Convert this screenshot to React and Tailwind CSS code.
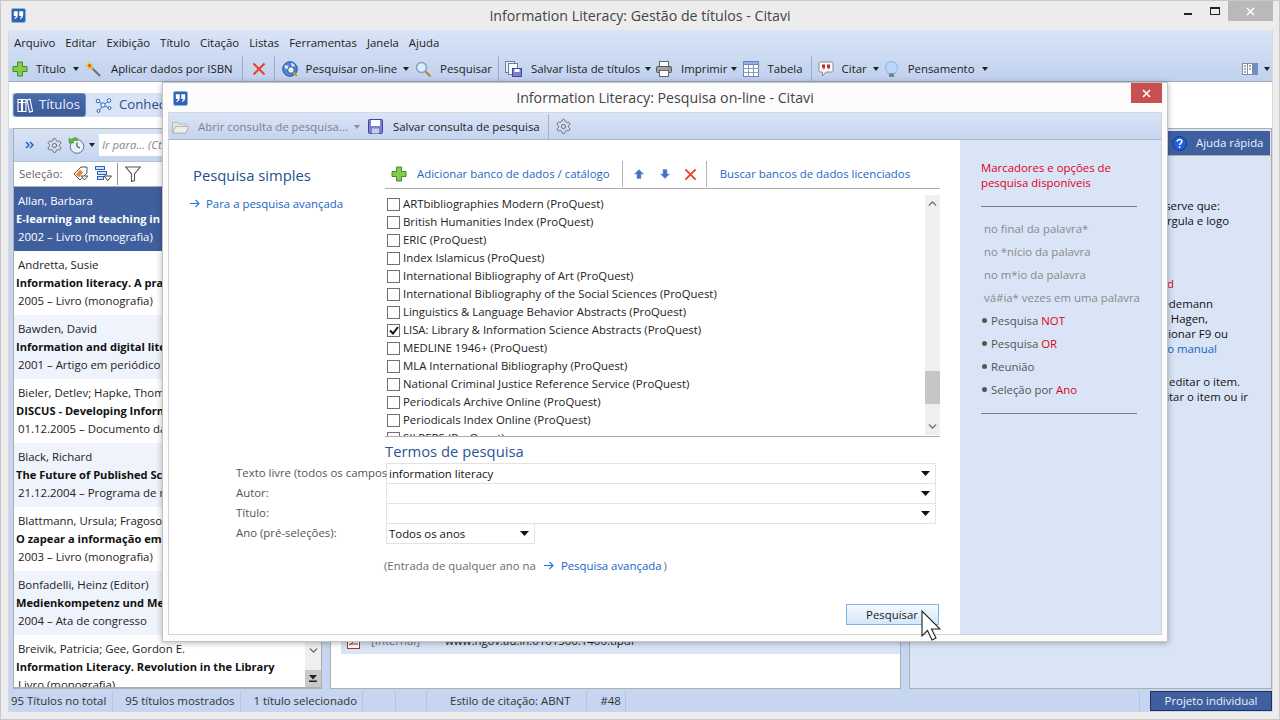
// App.jsx
import React from 'react';
import { Settings, ChevronUp, ChevronDown } from 'lucide-react';

const Logo = () => (
  <svg width="15" height="15" viewBox="0 0 16 16">
    <rect x="0.500" y="0.500" width="15" height="15" rx="2" fill="#2f62b5" stroke="#8fb0e0" />
    <path d="M3 3.500h4.200v3.800c0 2-1 3.600-3 4.500l-.7-1c1-.6 1.600-1.300 1.700-2.400H3zM8.800 3.500H13v3.800c0 2-1 3.600-3 4.500l-.7-1c1-.6 1.600-1.300 1.700-2.400H8.800z" fill="#fff" />
  </svg>
);

const Plus = () => (
  <svg width="16" height="16" viewBox="0 0 16 16" className="shrink-0">
    <path d="M5.500 1h5v4.500h4.500v5h-4.500v4.500h-5v-4.500h-4.500v-5h4.500z" fill="#86c94f" stroke="#3f8f22" />
  </svg>
);

const RedX = ({ size = 14 }) => (
  <svg width={size} height={size} viewBox="0 0 14 14" className="shrink-0">
    <path d="M1.500 1.500l11 11M12.500 1.500l-11 11" stroke="#e8402a" strokeWidth="2" />
  </svg>
);

const Caret = ({ className = '' }) => (
  <svg width="6" height="4" viewBox="0 0 6 4" className={`shrink-0 ${className}`}>
    <path d="M0 0h6L3 4z" fill="#222" />
  </svg>
);

const Wand = () => (
  <svg width="16" height="16" viewBox="0 0 16 16" className="shrink-0">
    <path d="M6 6l9 9" stroke="#6f6f6f" strokeWidth="2" />
    <path d="M4.500 0.500l1 3 3-.5-2 2.500 1.500 2.500-3-1-2 2 .2-3-3-1.500 3-.8z" fill="#f6a623" stroke="#e6d34a" strokeWidth="0.600" />
    <circle cx="4.500" cy="4.500" r="1.200" fill="#e23b2e" />
  </svg>
);

const Globe = () => (
  <svg width="17" height="17" viewBox="0 0 17 17" className="shrink-0">
    <circle cx="8" cy="8" r="7.300" fill="#4f86d8" stroke="#24559f" />
    <path d="M3 4c2 0 3 1 4 2S5 9 4 8 2 6 3 4zM9 2c2 0 3 1 4 3l-3 1z" fill="#dbe9fb" />
    <circle cx="9" cy="9" r="3.300" fill="#e8f2ff" stroke="#3d4f6d" />
    <path d="M11.500 11.500l3.500 3.500" stroke="#c79a2c" strokeWidth="2" />
  </svg>
);

const Search = () => (
  <svg width="17" height="17" viewBox="0 0 17 17" className="shrink-0">
    <circle cx="6.500" cy="6.500" r="5" fill="#dcecfb" stroke="#7f9fbf" strokeWidth="1.400" />
    <path d="M10.500 10.500l5 5" stroke="#b98a3a" strokeWidth="2.400" />
  </svg>
);

const SaveList = () => (
  <svg width="17" height="16" viewBox="0 0 17 16" className="shrink-0">
    <rect x="0.500" y="0.500" width="9" height="11" fill="#e6edf7" stroke="#6a7fa6" />
    <rect x="3.500" y="2.500" width="9" height="11" fill="#f4f7fb" stroke="#6a7fa6" />
    <rect x="7.500" y="7.500" width="9" height="8" fill="#7b7fd0" stroke="#47498f" />
    <rect x="9.500" y="8" width="5" height="3" fill="#fff" />
  </svg>
);

const Printer = () => (
  <svg width="16" height="16" viewBox="0 0 16 16" className="shrink-0">
    <rect x="3.500" y="0.500" width="9" height="5" fill="#fff" stroke="#666" />
    <rect x="0.500" y="5.500" width="15" height="6" rx="1" fill="#9aa5ad" stroke="#555" />
    <rect x="3.500" y="9.500" width="9" height="6" fill="#fff" stroke="#666" />
    <rect x="12" y="6.500" width="2" height="1.500" fill="#4bb04b" />
  </svg>
);

const TableIcon = () => (
  <svg width="16" height="16" viewBox="0 0 16 16" className="shrink-0">
    <rect x="0.500" y="0.500" width="15" height="15" fill="#fff" stroke="#6a86b8" />
    <rect x="0.500" y="0.500" width="15" height="3" fill="#8fb0e0" stroke="#6a86b8" />
    <path d="M5.500 3.500v12M10.500 3.500v12M.5 7.500h15M.5 11.500h15" stroke="#8a9dbf" fill="none" />
  </svg>
);

const Bubble = () => (
  <svg width="16" height="16" viewBox="0 0 16 16" className="shrink-0">
    <path d="M2.500 1h11A1.500 1.500 0 0 1 15 2.500v7A1.500 1.500 0 0 1 13.500 11H8l-3.500 4v-4h-2A1.500 1.500 0 0 1 1 9.500v-7A1.500 1.500 0 0 1 2.500 1z" fill="#fbfbfb" stroke="#8a8a8a" />
    <path d="M4 3.500h3v2.700c0 1.100-.6 1.900-1.800 2.400l-.4-.7c.6-.3.8-.7.9-1.200H4zM9 3.500h3v2.700c0 1.100-.6 1.900-1.800 2.400l-.4-.7c.6-.3.8-.7.9-1.200H9z" fill="#c62828" />
  </svg>
);

const Bulb = () => (
  <svg width="13" height="17" viewBox="0 0 13 17" className="shrink-0">
    <path d="M6.500 0.500a6 6 0 0 1 6 6c0 2.500-1.800 3.500-2.500 6H3c-.7-2.500-2.500-3.500-2.500-6a6 6 0 0 1 6-6z" fill="#bcd6fa" stroke="#8fb0de" />
    <rect x="4" y="12.500" width="5" height="3.500" fill="#77818c" />
  </svg>
);

const ViewIcon = () => (
  <svg width="16" height="12" viewBox="0 0 16 12" className="shrink-0">
    <rect x="0.500" y="0.500" width="15" height="11" fill="#fff" stroke="#7f8ea5" />
    <path d="M5.500 .5v11M10.500 .5v11" stroke="#7f8ea5" />
    <rect x="11" y="1" width="4" height="10" fill="#6f8fc4" />
    <path d="M2 3h2M2 6h2M2 9h2M7 3h2M7 6h2" stroke="#555" />
  </svg>
);

const Books = () => (
  <svg width="16" height="15" viewBox="0 0 16 15" className="shrink-0">
    <path d="M1 1.500h3.500v12H1zM5.500 1.500H9v12H5.500zM10 2l3-.8 2.500 12-3 .8z" fill="none" stroke="#fff" strokeWidth="1.100" />
    <path d="M1 4.500h3.500M5.500 4.500H9" stroke="#fff" />
  </svg>
);

const Network = () => (
  <svg width="17" height="16" viewBox="0 0 17 16" className="shrink-0">
    <path d="M8 8L3 4M8 8l6-4M8 8l-4 6M8 8l6 3" stroke="#3f78c9" strokeWidth="1" />
    <circle cx="8" cy="8" r="2.200" fill="#fff" stroke="#2f62b5" />
    <circle cx="3" cy="4" r="1.800" fill="#fff" stroke="#2f62b5" />
    <circle cx="14" cy="3.500" r="1.800" fill="#fff" stroke="#2f62b5" />
    <circle cx="3.500" cy="14" r="1.500" fill="#fff" stroke="#2f62b5" />
    <circle cx="14.500" cy="11" r="1.500" fill="#fff" stroke="#2f62b5" />
  </svg>
);

const Clock = () => (
  <svg width="17" height="17" viewBox="0 0 17 17" className="shrink-0">
    <circle cx="9" cy="9.500" r="6.800" fill="#e8f0fa" stroke="#5d7595" />
    <path d="M9 5.500v4l3 1.500" stroke="#333" fill="none" />
    <path d="M1 1v5h5L4.500 4.500C6 3 8 3 9.500 3.500L9 1C7 .5 5 1 3 2.500z" fill="#5bbb3a" stroke="#38861f" strokeWidth="0.500" />
  </svg>
);

const DoubleChevron = () => (
  <svg width="9" height="8" viewBox="0 0 9 8" className="shrink-0">
    <path d="M1 1l3 3-3 3M5 1l3 3-3 3" fill="none" stroke="#1f66c8" strokeWidth="1.500" />
  </svg>
);

const TagIcon = () => (
  <svg width="17" height="16" viewBox="0 0 17 16" className="shrink-0">
    <path d="M9 1h6v6l-7 7-6-6z" fill="#fff" stroke="#555" />
    <path d="M8 3.500l3 3-4 5-3-3z" fill="#f0803c" />
    <path d="M9 10h7l-3.500 4z" fill="#fff" stroke="#555" />
  </svg>
);

const TreeFilter = () => (
  <svg width="17" height="16" viewBox="0 0 17 16" className="shrink-0">
    <rect x="0.500" y="0.500" width="9" height="3" fill="#cfe0f7" stroke="#2f62b5" />
    <rect x="2.500" y="5.500" width="9" height="3" fill="#cfe0f7" stroke="#2f62b5" />
    <rect x="2.500" y="10.500" width="6" height="3" fill="#cfe0f7" stroke="#2f62b5" />
    <path d="M9 10h7.500l-3.700 4.500z" fill="#fff" stroke="#444" />
  </svg>
);

const Funnel = () => (
  <svg width="16" height="16" viewBox="0 0 16 16" className="shrink-0">
    <path d="M.8 1h14.400L9.500 8v6.500l-3 1V8z" fill="#fff" stroke="#555" strokeWidth="1.100" />
  </svg>
);

const Folder = () => (
  <svg width="17" height="15" viewBox="0 0 17 15" className="shrink-0">
    <path d="M.5 3.500h5l1.500 1.500h7v9H.5z" fill="#e4e4e4" stroke="#b5b5b5" />
    <path d="M.5 14l3-6.500h13L14 14z" fill="#ededed" stroke="#b5b5b5" />
  </svg>
);

const Floppy = () => (
  <svg width="15" height="15" viewBox="0 0 15 15" className="shrink-0">
    <rect x="0.500" y="0.500" width="14" height="14" rx="1" fill="#7d7fd4" stroke="#42449a" />
    <rect x="3" y="1" width="9" height="6" fill="#fff" />
    <rect x="4" y="9.500" width="7" height="5" fill="#c9cdea" />
  </svg>
);

const ArrowV = ({ down }) => (
  <svg width="10" height="10" viewBox="0 0 10 10" className={down ? 'shrink-0 rotate-180' : 'shrink-0'}>
    <path d="M5 .5L9.500 5H7v4.500H3V5H.5z" fill="#3f72c8" stroke="#6f97da" strokeWidth="0.500" />
  </svg>
);

const ArrowLink = () => (
  <svg width="10" height="9" viewBox="0 0 10 9" className="shrink-0">
    <path d="M0 4.500h9M5.500 1l3.500 3.500L5.500 8" fill="none" stroke="#1a78e0" strokeWidth="1.100" />
  </svg>
);

const Cursor = () => (
  <svg width="20" height="31" viewBox="0 0 20 31">
    <path d="M1 1v25l5.500-5.500L11 30l4-2-4.500-9H19z" fill="#fff" stroke="#222" strokeWidth="1.100" />
  </svg>
);

const Sep = ({ className = 'h-[26px] bg-[#9fadc4]' }) => <div className={`w-px shrink-0 ${className}`} />;

const titles = [
  ['Allan, Barbara', 'E-learning and teaching in library and information', '2002 – Livro (monografia)'],
  ['Andretta, Susie', 'Information literacy. A practitioner’s guide', '2005 – Livro (monografia)'],
  ['Bawden, David', 'Information and digital literacies', '2001 – Artigo em periódico'],
  ['Bieler, Detlev; Hapke, Thomas', 'DISCUS - Developing Information', '01.12.2005 – Documento da internet'],
  ['Black, Richard', 'The Future of Published Scholarship', '21.12.2004 – Programa de rádio'],
  ['Blattmann, Ursula; Fragoso, Graça', 'O zapear a informação em bibliotecas', '2003 – Livro (monografia)'],
  ['Bonfadelli, Heinz (Editor)', 'Medienkompetenz und Medienleistungen', '2004 – Ata de congresso'],
  ['Breivik, Patricia; Gee, Gordon E.', 'Information Literacy. Revolution in the Library', 'Livro (monografia)'],
];

const databases = [
  'ARTbibliographies Modern (ProQuest)',
  'British Humanities Index (ProQuest)',
  'ERIC (ProQuest)',
  'Index Islamicus (ProQuest)',
  'International Bibliography of Art (ProQuest)',
  'International Bibliography of the Social Sciences (ProQuest)',
  'Linguistics & Language Behavior Abstracts (ProQuest)',
  'LISA: Library & Information Science Abstracts (ProQuest)',
  'MEDLINE 1946+ (ProQuest)',
  'MLA International Bibliography (ProQuest)',
  'National Criminal Justice Reference Service (ProQuest)',
  'Periodicals Archive Online (ProQuest)',
  'Periodicals Index Online (ProQuest)',
  'SILPERS (ProQuest)',
];

const TitleRow = ({ item, index }) => {
  const selected = index === 0;
  const alt = index % 2 === 0;
  return (
    <div className={`h-[64px] shrink-0 pt-[5px] whitespace-nowrap leading-[18px] ${selected ? 'bg-[#3f5f9e] text-white' : alt ? 'bg-[#eff3fb] text-[#222]' : 'bg-white text-[#222]'}`}>
      <div className="pl-[4px]">{item[0]}</div>
      <div className={`pl-[2px] text-[11.100px] font-bold ${selected ? '' : 'text-[#111]'}`}>{item[1]}</div>
      <div className="pl-[4px]">{item[2]}</div>
    </div>
  );
};

const Field = ({ value, wide = true }) => (
  <div className={`flex h-[21px] items-center justify-between pl-[2px] pr-[5px] border border-[#e3e3e3] -mt-px first:mt-0 text-[#111] ${wide ? 'w-[550px]' : 'w-[149px]'}`}>
    <span>{value}</span>
    <svg width="9" height="5" viewBox="0 0 9 5"><path d="M0 0h9L4.500 5z" fill="#111" /></svg>
  </div>
);

const SearchDialog = () => (
  <div className="absolute left-[161px] top-[81px] z-10 flex h-[560px] w-[1006px] flex-col border border-[#c4c4c4] bg-[#fcfcfc] px-[5px] pb-[6px] shadow-[0_1px_6px_rgba(0,0,0,0.3)]">
    <div className="relative flex h-[29px] shrink-0 items-center justify-center pt-[1px] text-[14.200px] text-[#444]">
      <div className="absolute left-[5px] top-[8px]"><Logo /></div>
      <span>Information Literacy: Pesquisa on-line - Citavi</span>
      <div className="absolute right-0 top-0 flex h-[20px] w-[31px] items-center justify-center bg-[#c75050]">
        <svg width="9" height="9" viewBox="0 0 9 9"><path d="M1 1l7 7M8 1l-7 7" stroke="#fff" strokeWidth="1.600" /></svg>
      </div>
    </div>

    <div className="flex h-[28px] shrink-0 items-center border border-[#d2d8e2] border-b-[#aeb6c4] bg-gradient-to-b from-[#d9e4f6] to-[#c5d4ef] pl-[3px] pt-[1px]">
      <Folder />
      <span className="ml-[9px] text-[#7b828e]">Abrir consulta de pesquisa...</span>
      <Caret className="ml-[6px] opacity-40" />
      <div className="ml-[8px]"><Floppy /></div>
      <span className="ml-[10px] text-[#222]">Salvar consulta de pesquisa</span>
      <Sep className="ml-[8px] h-[26px] bg-[#a8b3c6]" />
      <Settings size={17} strokeWidth={1.300} className="ml-[6px] text-[#666]" />
    </div>

    <div className="flex min-h-0 flex-1 border-x border-b border-[#d2d2d2] bg-white">
      <div className="flex w-[216px] shrink-0 flex-col pl-[24px] pt-[25px]">
        <div className="text-[14.800px] leading-[20px] text-[#24508f]">Pesquisa simples</div>
        <div className="mt-[10px] -ml-[3px] flex items-center gap-[6px] text-[#1765c4]">
          <ArrowLink />
          <span>Para a pesquisa avançada</span>
        </div>
      </div>

      <div className="relative w-[575px] shrink-0 pt-[20px]">
        <div className="flex h-[29px] w-[555px] items-center border-b border-[#aeaeae] text-[#1f66c8]">
          <div className="ml-[6px]"><Plus /></div>
          <span className="ml-[10px]">Adicionar banco de dados / catálogo</span>
          <Sep className="ml-[12px] h-[26px] bg-[#b5b5b5]" />
          <div className="ml-[11px]"><ArrowV /></div>
          <div className="ml-[16px]"><ArrowV down /></div>
          <div className="ml-[14px]"><RedX size={13} /></div>
          <Sep className="ml-[9px] h-[26px] bg-[#b5b5b5]" />
          <span className="ml-[13px]">Buscar bancos de dados licenciados</span>
        </div>

        <div className="mt-[6px] flex h-[242px] w-[555px] border-b border-[#aeaeae]">
          <div className="min-w-0 flex-1 overflow-hidden">
            {databases.map((name, i) => (
              <label key={name} className="flex h-[18px] shrink-0 items-center whitespace-nowrap text-[#222]">
                <span className="ml-[2px] flex h-[13px] w-[13px] shrink-0 items-center justify-center border border-[#707070] bg-white">
                  {i === 7 && <svg width="10" height="9" viewBox="0 0 10 9"><path d="M1 4.500l3 3L9 1" fill="none" stroke="#111" strokeWidth="2" /></svg>}
                </span>
                <span className="ml-[3px]">{name}</span>
              </label>
            ))}
          </div>
          <div className="flex h-[240px] w-[15px] shrink-0 flex-col items-center bg-[#efefef]">
            <ChevronUp size={13} strokeWidth={2.500} className="mt-[2px] text-[#666]" />
            <div className="mt-[161px] h-[33px] w-full bg-[#c6c6c6]" />
            <ChevronDown size={13} strokeWidth={2.500} className="mt-[16px] text-[#666]" />
          </div>
        </div>

        <div className="mt-[3px] h-[23px] text-[14.800px] leading-[22px] text-[#2a5596]">Termos de pesquisa</div>

        <div className="relative">
          <div className="absolute right-[calc(100%-1px)] top-0 w-[150px] whitespace-nowrap text-[#555]">
            <div className="flex h-[20px] items-center">Texto livre (todos os campos</div>
            <div className="flex h-[20px] items-center">Autor:</div>
            <div className="flex h-[20px] items-center">Título:</div>
            <div className="flex h-[20px] items-center">Ano (pré-seleções):</div>
          </div>
          <div className="ml-px flex flex-col">
            <Field value="information literacy" />
            <Field value="" />
            <Field value="" />
            <Field value="Todos os anos" wide={false} />
          </div>
        </div>

        <div className="mt-[13px] flex items-center text-[#6a6a6a]">
          <span className="-ml-px">(Entrada de qualquer ano na</span>
          <div className="ml-[8px]"><ArrowLink /></div>
          <span className="ml-[7px] text-[#1765c4]">Pesquisa avançada</span>
          <span className="ml-[2px]">)</span>
        </div>

        <div className="absolute left-[461px] top-[464px] flex h-[21px] w-[93px] items-center justify-center border border-[#7ab4ee] bg-gradient-to-b from-[#f4f9fe] to-[#d5e7fa] pr-[1px] text-[#222]">
          Pesquisar
        </div>
        <div className="absolute left-[536px] top-[470px] z-20"><Cursor /></div>
      </div>

      <div className="min-w-0 flex-1 bg-[#d9e4f6] pl-[21px] pt-[20px]">
        <div className="leading-[15px] text-[#e0001b]">Marcadores e opções de<br />pesquisa disponíveis</div>
        <div className="mt-[16px] h-px w-[156px] bg-[#808080]" />
        <div className="mt-[10px] flex flex-col text-[#8a8a8a]">
          {['no final da palavra*', 'no *nício da palavra', 'no m*io da palavra', 'vá#ia* vezes em uma palavra'].map((t) => (
            <div key={t} className="flex h-[23px] items-center pl-[3px] whitespace-nowrap">{t}</div>
          ))}
          {[['Pesquisa ', 'NOT'], ['Pesquisa ', 'OR'], ['Reunião', ''], ['Seleção por ', 'Ano']].map(([a, b]) => (
            <div key={a + b} className="flex h-[23px] items-center whitespace-pre text-[#555]">
              <span className="mr-[4px] ml-[1px] h-[5px] w-[5px] rounded-full bg-[#555]" />
              {a}<span className="text-[#e0001b]">{b}</span>
            </div>
          ))}
        </div>
        <div className="mt-[12px] h-px w-[156px] bg-[#808080]" />
      </div>
    </div>
  </div>
);

const MainToolbar = () => (
  <div className="mt-[1px] flex h-[26px] items-center pl-[3px] text-[#222] whitespace-nowrap">
    <Plus />
    <span className="ml-[8px]">Título</span>
    <Caret className="ml-[7px]" />
    <div className="ml-[6px]"><Wand /></div>
    <span className="ml-[10px]">Aplicar dados por ISBN</span>
    <Sep className="ml-[9px] h-[26px] bg-[#9fadc4]" />
    <div className="ml-[9px]"><RedX /></div>
    <Sep className="ml-[8px] h-[26px] bg-[#9fadc4]" />
    <div className="ml-[7px]"><Globe /></div>
    <span className="ml-[7px]">Pesquisar on-line</span>
    <Caret className="ml-[6px]" />
    <div className="ml-[6px]"><Search /></div>
    <span className="ml-[8px]">Pesquisar</span>
    <Sep className="ml-[6px] h-[26px] bg-[#9fadc4]" />
    <div className="ml-[6px]"><SaveList /></div>
    <span className="ml-[9px]">Salvar lista de títulos</span>
    <Caret className="ml-[5px]" />
    <div className="ml-[5px]"><Printer /></div>
    <span className="ml-[9px]">Imprimir</span>
    <Caret className="ml-[4px]" />
    <div className="ml-[6px]"><TableIcon /></div>
    <span className="ml-[8px]">Tabela</span>
    <Sep className="ml-[8px] h-[26px] bg-[#9fadc4]" />
    <div className="ml-[6px]"><Bubble /></div>
    <span className="ml-[8px]">Citar</span>
    <Caret className="ml-[6px]" />
    <div className="ml-[6px]"><Bulb /></div>
    <span className="ml-[10px]">Pensamento</span>
    <Caret className="ml-[7px]" />
    <div className="ml-auto flex items-center gap-[6px] pr-[2px]">
      <ViewIcon />
      <Caret />
    </div>
  </div>
);

const App = () => {
  return (
    <div className="relative flex h-[720px] w-[1280px] flex-col overflow-hidden border border-[#c8c8c8] bg-[#ececec] font-['Open_Sans','Noto_Sans',sans-serif] text-[11.400px]">
      <div className="relative flex h-[29px] shrink-0 items-center justify-center text-[14.200px] text-[#444]">
        <div className="absolute left-[10px] top-[7px]"><Logo /></div>
        <span>Information Literacy: Gestão de títulos - Citavi</span>
        <div className="absolute right-[6px] top-0 flex h-[20px] items-center">
          <div className="mr-[18px] mt-[5px] h-[2px] w-[8px] bg-[#222]" />
          <div className="mr-[8px] h-[8px] w-[10px] border border-t-2 border-[#222]" />
          <div className="flex h-[20px] w-[45px] items-center justify-center bg-[#b9b9b9]">
            <svg width="9" height="9" viewBox="0 0 9 9"><path d="M1 1l7 7M8 1l-7 7" stroke="#fff" strokeWidth="1.500" /></svg>
          </div>
        </div>
      </div>

      <div className="ml-[7px] mr-[6px] flex min-h-0 flex-1 flex-col border-x border-[#d8d8d8]">
        <div className="h-[52px] shrink-0 border-b border-[#9fa9b8] bg-gradient-to-b from-[#d9e4f6] to-[#c0d1ee]">
          <div className="flex h-[25px] items-center gap-[10px] pl-[5px] text-[#222]">
            <span>Arquivo</span><span>Editar</span><span>Exibição</span><span>Título</span><span>Citação</span>
            <span>Listas</span><span>Ferramentas</span><span>Janela</span><span>Ajuda</span>
          </div>
          <MainToolbar />
        </div>

        <div className="flex h-[46px] shrink-0 bg-white pl-[3px] pt-[11px]">
          <div className="flex h-[24px] w-[150px] items-center bg-[#d9e4f6] pl-[1px] text-[13.200px] whitespace-nowrap">
            <div className="flex h-[24px] w-[73px] shrink-0 items-center gap-[6px] rounded-[3px] border border-[#6f8cc0] bg-gradient-to-b from-[#4a6cab] to-[#3a5a98] pl-[3px] text-[#e8eefa]">
              <Books />
              <span>Títulos</span>
            </div>
            <div className="ml-[9px]"><Network /></div>
            <span className="ml-[7px] text-[#2c4d85]">Conhecimento</span>
          </div>
        </div>

        <div className="flex min-h-0 flex-1 bg-[#c6d5f0]">
          <div className="ml-[4px] flex w-[309px] shrink-0 flex-col overflow-hidden border border-b-2 border-[#aeaeae] bg-white">
            <div className="flex h-[33px] shrink-0 items-center border-b border-[#b5c0d2] bg-gradient-to-b from-[#d9e4f6] to-[#c5d4ef] pl-[11px]">
              <DoubleChevron />
              <Settings size={17} strokeWidth={1.300} className="ml-[12px] text-[#666]" />
              <div className="ml-[5px]"><Clock /></div>
              <Caret className="ml-[4px]" />
              <div className="ml-[4px] flex h-[22px] flex-1 items-center bg-white pl-[3px] italic text-[#888]">Ir para... (Ctrl+G)</div>
            </div>
            <div className="flex h-[25px] shrink-0 items-center border-b border-[#aeaeae] pl-[5px] text-[#666]">
              <span>Seleção:</span>
              <div className="ml-[9px]"><TagIcon /></div>
              <div className="ml-[6px]"><TreeFilter /></div>
              <Sep className="ml-[5px] h-[22px] bg-[#999]" />
              <div className="ml-[7px]"><Funnel /></div>
            </div>
            <div className="relative min-h-0 flex-1 overflow-hidden">
              {titles.map((item, i) => <TitleRow key={item[0]} item={item} index={i} />)}
              <div className="absolute bottom-0 right-0 flex h-[48px] w-[16px] flex-col items-center justify-between bg-[#efefef]">
                <ChevronDown size={13} strokeWidth={2.500} className="mt-[5px] text-[#666]" />
                <div className="flex h-[17px] w-full items-center justify-center bg-[#c9c9c9]">
                  <svg width="8" height="7" viewBox="0 0 8 7"><path d="M0 0h8L4 4.500zM0 5.500h8V7H0z" fill="#222" /></svg>
                </div>
              </div>
            </div>
          </div>

          <div className="ml-[8px] flex w-[571px] shrink-0 flex-col justify-end border border-[#aeaeae] bg-white pb-[34px]">
            <div className="ml-[10px] flex h-[30px] items-center bg-[#d9e4f6] pl-[6px] text-[#777] whitespace-nowrap">
              <svg width="13" height="13" viewBox="0 0 13 13" className="mt-[6px]"><rect x="0.500" y="0.500" width="12" height="12" fill="#fff" stroke="#a33" /><path d="M2 9c3-1 4-3 5-5M3 8h8" stroke="#a33" fill="none" /></svg>
              <span className="ml-[11px] mt-[4px]">[Internal]</span>
              <span className="ml-[25px] mt-[4px] text-[#222]">www.ngov.au.in.0101500.1400.tipdf</span>
            </div>
          </div>

          <div className="ml-[8px] flex min-w-0 flex-1 flex-col border border-[#aeaeae] bg-[#d9e4f6]">
            <div className="mt-[2px] flex h-[25px] shrink-0 items-center justify-end border-b border-[#aeaeae] bg-[#d9e4f6] pr-[1px]">
              <div className="flex h-[24px] w-[102px] items-center gap-[9px] bg-[#3f5f9e] pl-[4px] text-[#eef2fa]">
                <svg width="15" height="15" viewBox="0 0 15 15"><circle cx="7.500" cy="7.500" r="7" fill="#1f5fd8" stroke="#12398a" /><path d="M5.200 5.600c.2-1.400 1.100-2 2.400-2 1.300 0 2.300.8 2.300 2 0 1.900-2.300 1.700-2.300 3.500" fill="none" stroke="#fff" strokeWidth="1.500" /><rect x="6.700" y="10.300" width="1.600" height="1.600" fill="#fff" /></svg>
                <span>Ajuda rápida</span>
              </div>
            </div>
            <div className="pt-[41.500px] text-[#111] whitespace-nowrap leading-[15px]">
              <div className="w-[310px] text-right">Observe que:</div>
              <div className="w-[319px] text-right">uma vírgula e logo</div>
              <div className="mt-[48px] w-[264px] text-right text-[#e0001b]">Exemplo de Word</div>
              <div className="mt-[5px] w-[303px] text-right">Wiedemann</div>
              <div className="w-[298px] text-right">Hagen,</div>
              <div className="w-[318px] text-right">selecionar F9 ou</div>
              <div className="w-[307px] text-right text-[#1765c4]">modo manual</div>
              <div className="mt-[18px] w-[330px] text-right">editar o item.</div>
              <div className="w-[338px] text-right">citar o item ou ir</div>
            </div>
          </div>
        </div>

        <div className="flex h-[23px] shrink-0 items-center bg-[#c6d5f0] text-[#333] whitespace-nowrap">
          <span className="ml-[2px]">95 Títulos no total</span>
          <Sep className="ml-[6px] h-[20px] bg-[#b5c3dc]" />
          <span className="ml-[12px]">95 títulos mostrados</span>
          <Sep className="ml-[6px] h-[20px] bg-[#b5c3dc]" />
          <span className="ml-[12px]">1 título selecionado</span>
          <Sep className="ml-[5px] h-[20px] bg-[#b5c3dc]" />
          <Sep className="ml-[32px] h-[20px] bg-[#b5c3dc]" />
          <Sep className="ml-[30px] h-[20px] bg-[#b5c3dc]" />
          <span className="ml-[23px]">Estilo de citação: ABNT</span>
          <Sep className="ml-[16px] h-[20px] bg-[#b5c3dc]" />
          <span className="ml-[13px]">#48</span>
          <Sep className="ml-[4px] h-[20px] bg-[#b5c3dc]" />
          <Sep className="ml-auto h-[20px] bg-[#b5c3dc]" />
          <div className="ml-[10px] flex h-[20px] w-[122px] items-center justify-center border border-[#1f2f5f] bg-[#3f5f9e] text-[#eef2fa]">Projeto individual</div>
        </div>
      </div>
      <div className="h-[7px] shrink-0" />
      <SearchDialog />
    </div>
  );
};

export default App;
